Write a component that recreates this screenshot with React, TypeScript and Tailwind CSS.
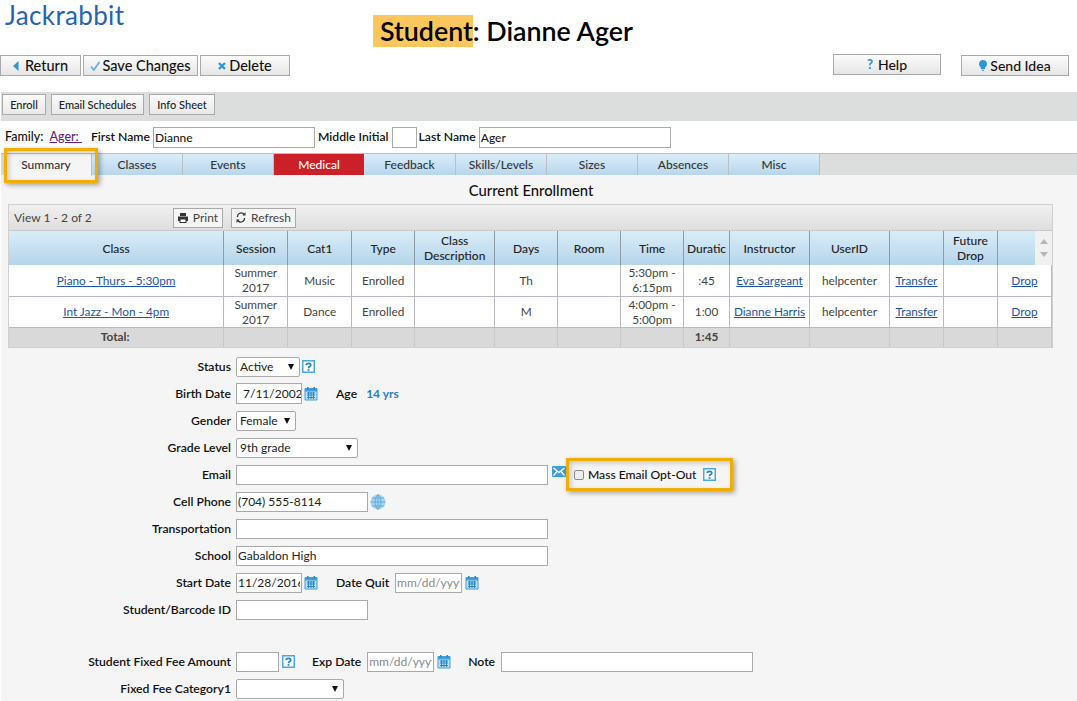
import React from 'react'

const HelpIcon = () => (
	<svg width="13" height="13" viewBox="0 0 13 13" className="shrink-0">
		<rect x="0.75" y="0.75" width="11.5" height="11.5" fill="#fff" stroke="#4aa8dc" strokeWidth="1.500" />
		<path d="M4.200 5C4.200 2.800 8.800 2.800 8.800 5C8.800 6.600 6.500 6.500 6.500 8.200" fill="none" stroke="#1f86c8" strokeWidth="1.700" />
		<rect x="5.600" y="9.100" width="1.800" height="1.700" fill="#1f86c8" />
	</svg>
)

const CalendarIcon = () => (
	<svg width="14" height="14" viewBox="0 0 14 14" className="shrink-0">
		<rect x="0.5" y="1" width="13" height="12.5" rx="1" fill="#3f9fdc" />
		<rect x="1.5" y="4.5" width="11" height="8" fill="#bfe0f4" />
		<path d="M3 6h8M3 8h8M3 10.500h8M4.500 5v7M7 5v7M9.500 5v7" stroke="#2d86c4" strokeWidth="1" />
		<rect x="3" y="0" width="1.500" height="2.500" fill="#2d86c4" />
		<rect x="9.500" y="0" width="1.500" height="2.500" fill="#2d86c4" />
	</svg>
)

const MailIcon = () => (
	<svg width="14" height="11" viewBox="0 0 14 11" className="shrink-0">
		<rect width="14" height="11" rx="1" fill="#3f9fdc" />
		<path d="M1.500 2 7 6.500 12.500 2M1.500 9.500 5 5.500M12.500 9.500 9 5.500" fill="none" stroke="#fff" strokeWidth="1.300" />
	</svg>
)

const GlobeIcon = () => (
	<svg width="16" height="16" viewBox="0 0 16 16" className="shrink-0">
		<circle cx="8" cy="8" r="7.500" fill="#a9d3ef" />
		<path d="M8 .5v15M.5 8h15M1.800 4h12.400M1.800 12h12.400M8 .5C4 4 4 12 8 15.500M8 .5c4 3.500 4 11.500 0 15" fill="none" stroke="#5aa9de" strokeWidth="0.900" />
	</svg>
)

const BackIcon = () => (
	<svg width="6" height="10" viewBox="0 0 6 10"><path d="M5.500 0v10L0 5z" fill="#2e96d8" /></svg>
)
const CheckIcon = () => (
	<svg width="10" height="10" viewBox="0 0 10 10"><path d="M1 5.500 3.800 9 9.500 1" fill="none" stroke="#62b0e4" strokeWidth="1.800" /></svg>
)
const CrossIcon = () => (
	<svg width="8" height="8" viewBox="0 0 8 8"><path d="M1 1l6 6M7 1 1 7" stroke="#2e96d8" strokeWidth="2.400" /></svg>
)
const BulbIcon = () => (
	<svg width="8" height="11" viewBox="0 0 8 11"><path d="M4 0a4 4 0 0 1 2.200 7.300V9H1.800V7.300A4 4 0 0 1 4 0zM2.500 9.700h3L4.500 11h-1z" fill="#2e96d8" /></svg>
)
const PrintIcon = () => (
	<svg width="10" height="10" viewBox="0 0 10 10"><path d="M2 0h6v3H2zM0 3.500h10V8H8.500v2h-7V8H0z" fill="#333" /><rect x="2.500" y="6.500" width="5" height="2.500" fill="#fff" /></svg>
)
const RefreshIcon = () => (
	<svg width="10" height="11" viewBox="0 0 10 11"><path d="M8 2.500A3.600 3.600 0 0 0 1.500 5M2 8.500A3.600 3.600 0 0 0 8.500 6" fill="none" stroke="#333" strokeWidth="1.300" /><path d="M6.500 3.500h3V0zM3.500 7.500h-3V11z" fill="#333" /></svg>
)

const topBtn = "flex h-[21px] items-center justify-center border border-[#a9a9a9] bg-gradient-to-b from-[#fbfbfb] to-[#e6e6e6] font-medium text-[#111]"
const subBtn = "flex h-[21px] items-center justify-center border border-[#a9a9a9] bg-gradient-to-b from-[#fbfbfb] to-[#e9e9e9] pt-px text-[11px] font-medium text-[#222]"

const tabs = [
	{ name: "Classes", w: "w-[91px]" },
	{ name: "Events", w: "w-[91px]" },
	{ name: "Medical", w: "w-[90px]", red: true },
	{ name: "Feedback", w: "w-[92px]" },
	{ name: "Skills/Levels", w: "w-[91px]" },
	{ name: "Sizes", w: "w-[91px]" },
	{ name: "Absences", w: "w-[91px]" },
	{ name: "Misc", w: "w-[91px]" },
]

const cols = [215, 64, 64, 63, 80, 63, 63, 63, 46, 80, 80, 54, 54, 54]
const heads = ["Class", "Session", "Cat1", "Type", "Class Description", "Days", "Room", "Time", "Duratic", "Instructor", "UserID", "", "Future Drop", ""]

const link = "text-[#1c55a5] underline"
const td = "border-r border-b border-[#bbb9c6] px-[1px] text-center align-middle"

const rows = [
	{ cls: "Piano - Thurs - 5:30pm", cat: "Music", days: "Th", time: "5:30pm - 6:15pm", dur: ":45", inst: "Eva Sargeant" },
	{ cls: "Int Jazz - Mon - 4pm", cat: "Dance", days: "M", time: "4:00pm - 5:00pm", dur: "1:00", inst: "Dianne Harris" },
]

const inputCls = "h-[20px] border border-[#a9a9a9] bg-white px-[1px] text-[12px] text-[#222] outline-none placeholder:text-[#8a8a8a]"
const labelCls = "pt-px text-[12.200px] font-semibold"

const Row = ({ label, children }: { label: string; children?: React.ReactNode }) => (
	<div className="flex h-[27px] items-center">
		<label className="w-[230px] shrink-0 pt-px text-right text-[12.200px] font-semibold text-[#111]">{label}</label>
		<div className="ml-[5px] flex items-center">{children}</div>
	</div>
)

const Select = ({ value, w }: { value: string; w: string }) => (
	<div className={`relative h-[20px] ${w}`}>
		<select defaultValue={value} className="block h-full w-full appearance-none rounded-[2px] border border-[#a9a9a9] bg-white pl-[3px] text-[12px] text-[#222] outline-none">
			<option>{value}</option>
		</select>
		<span className="absolute top-[7px] right-[6px] h-0 w-0 border-x-[3px] border-t-[6px] border-x-transparent border-t-[#111]" />
	</div>
)

export default function App() {
	return (
		<div className="relative h-[701px] w-[1077px] overflow-hidden bg-white font-[Lato,sans-serif] text-[#111]">
			<div className="flex h-[54px]">
				<div className="h-[32px] w-[373px] pl-[5px] text-[26px] leading-[31.500px] font-normal tracking-[0.35px] text-[#2465ab]">Jackrabbit</div>
				<h1 className="mt-[14px] h-[35px] text-[26.800px] leading-[35px] font-semibold text-black">
					<span className="bg-[#fbc75c] pl-[7px]">Student</span>: Dianne Ager
				</h1>
			</div>

			<div className="flex h-[38px] items-start">
				<div className="mt-px flex gap-[2px] text-[14.500px]">
					<button className={`${topBtn} w-[81px] gap-[6px]`}><BackIcon />Return</button>
					<button className={`${topBtn} w-[115px] gap-[2px]`}><CheckIcon />Save Changes</button>
					<button className={`${topBtn} w-[90px] gap-[3px]`}><CrossIcon />Delete</button>
				</div>
				<button className={`${topBtn} ml-[543px] w-[108px] gap-[5px] text-[14px]`}><span className="text-[13px] font-black text-[#2e96d8]">?</span>Help</button>
				<button className={`${topBtn} mt-px ml-[20px] w-[108px] gap-[3px] text-[14px]`}><BulbIcon />Send Idea</button>
			</div>

			<div className="ml-px flex h-[29px] items-start gap-[5px] bg-[#dcdddd] pt-[2px] pl-px">
				<button className={`${subBtn} w-[44px]`}>Enroll</button>
				<button className={`${subBtn} w-[93px]`}>Email Schedules</button>
				<button className={`${subBtn} w-[66px]`}>Info Sheet</button>
			</div>

			<div className="flex h-[32px] items-center pl-[5px] text-[12.500px] font-medium">
				<span>Family:</span>
				<a className="ml-[6px] text-[#6a1b7a] underline">Ager:&nbsp;</a>
				<span className={`ml-[9px] ${labelCls}`}>First Name</span>
				<input defaultValue="Dianne" className={`${inputCls} ml-[3px] h-[21px] w-[162px]`} />
				<span className={`ml-[3px] ${labelCls}`}>Middle Initial</span>
				<input className={`${inputCls} ml-[3px] h-[21px] w-[25px]`} />
				<span className={`ml-[2px] ${labelCls}`}>Last Name</span>
				<input defaultValue="Ager" className={`${inputCls} ml-[3px] h-[21px] w-[192px]`} />
			</div>

			<div className="ml-px flex h-[22px] border-t border-[#bdbdc5] bg-[#dcdddd]">
				<div className="ml-[6px] flex h-[22px] w-[85px] items-center justify-center border-r border-[#bdbdc5] bg-[#f5f5f5] pr-[6px] text-[12px] font-medium text-[#333]">Summary</div>
				{tabs.map((tab) => (
					<div
						key={tab.name}
						className={`flex h-[21px] ${tab.w} items-center justify-center border-r border-[#bdbdc5] text-[12px] font-medium ${tab.red ? "border-r-0 bg-[#cc2029] font-bold text-white" : "bg-gradient-to-b from-[#d9edf8] to-[#b7d6ec] text-[#333]"}`}
					>
						{tab.name}
					</div>
				))}
			</div>

			<div className="ml-px h-[526px] bg-[#f5f5f5]">
				<div className="h-[29px] pt-[7px] pr-[16px] text-center text-[14.800px] leading-[17px] font-medium text-[#111]">Current Enrollment</div>

				<div className="relative ml-[7px] w-[1045px] border border-[#cfcfcf]">
					<div className="flex h-[26px] items-center border-b border-[#c9c9c9] bg-gradient-to-b from-[#f0f0f0] to-[#dedede] pl-[5px] text-[12px] text-[#444]">
						<span className="w-[159px]">View 1 - 2 of 2</span>
						<button className="flex h-[20px] w-[50px] items-center justify-center gap-[5px] border border-[#a9a9a9] bg-[#f5f5f5]"><PrintIcon />Print</button>
						<button className="ml-[8px] flex h-[20px] w-[65px] items-center justify-center gap-[5px] border border-[#a9a9a9] bg-[#f5f5f5]"><RefreshIcon />Refresh</button>
					</div>
					<table className="table-fixed border-collapse text-[11.800px] leading-[15px] text-[#444]">
						<colgroup>
							{cols.map((w, i) => <col key={i} style={{ width: w }} />)}
						</colgroup>
						<thead>
							<tr className="h-[34px]">
								{heads.map((h, i) => (
									<th key={i} className="overflow-hidden border-r border-[#8f9ba6] bg-gradient-to-b from-[#d9edf8] to-[#b4d4ea] px-0 text-center text-[12px] font-medium whitespace-normal text-[#222]">
										{h === "Duratic" ? <span className="whitespace-nowrap">{h}</span> : h}
									</th>
								))}
							</tr>
						</thead>
						<tbody className="bg-white">
							{rows.map((r) => (
								<tr key={r.cls} className="h-[31px]">
									<td className={td}><a className={link}>{r.cls}</a></td>
									<td className={td}>Summer 2017</td>
									<td className={td}>{r.cat}</td>
									<td className={td}>Enrolled</td>
									<td className={td}></td>
									<td className={td}>{r.days}</td>
									<td className={td}></td>
									<td className={td}>{r.time}</td>
									<td className={td}>{r.dur}</td>
									<td className={td}><a className={link}>{r.inst}</a></td>
									<td className={td}>helpcenter</td>
									<td className={td}><a className={link}>Transfer</a></td>
									<td className={td}></td>
									<td className={td}><a className={link}>Drop</a></td>
								</tr>
							))}
							<tr className="h-[20px] bg-[#d9d9d9] font-bold text-[#444]">
								{cols.map((_, i) => (
									<td key={i} className="border-r border-[#c8c8c8] pb-[2px] text-center">
										{i === 0 ? <span className="pr-[2px]">Total:</span> : i === 8 ? "1:45" : ""}
									</td>
								))}
							</tr>
						</tbody>
					</table>
					{/* scroll arrows sitting over the end of the header */}
					<div className="absolute top-[26px] right-0 flex h-[34px] w-[17px] flex-col items-center justify-between bg-[#f1f1f1] py-[8px]">
						<span className="h-0 w-0 border-x-[4px] border-b-[5px] border-x-transparent border-b-[#b5b5b5]" />
						<span className="h-0 w-0 border-x-[4px] border-t-[5px] border-x-transparent border-t-[#b5b5b5]" />
					</div>
				</div>

				<div className="mt-[5px]">
					<Row label="Status">
						<Select value="Active" w="w-[64px]" />
						<span className="ml-[2px] flex"><HelpIcon /></span>
					</Row>
					<Row label="Birth Date">
						<input defaultValue="7/11/2002" className={`${inputCls} h-[21px] w-[66px] pr-0 pl-[6px]`} />
						<span className="ml-[2px]"><CalendarIcon /></span>
						<span className={`ml-[18px] ${labelCls}`}>Age</span>
						<span className="ml-[9px] text-[12px] font-bold text-[#2e7fbd]">14 yrs</span>
					</Row>
					<Row label="Gender"><Select value="Female" w="w-[60px]" /></Row>
					<Row label="Grade Level"><Select value="9th grade" w="w-[122px]" /></Row>
					<Row label="Email">
						<input className={`${inputCls} w-[312px]`} />
						<span className="mb-[6px] ml-[4px]"><MailIcon /></span>
						<div className="-my-[4px] flex h-[33px] w-[167px] items-center border-[3px] border-[#f2ae00] pl-[5px] shadow-[2px_2px_5px_rgba(0,0,0,0.35),inset_2px_2px_5px_rgba(0,0,0,0.2)]">
							<input type="checkbox" className="h-[10px] w-[10px] appearance-none rounded-[2px] border border-[#8a8a8a] bg-[#eee]" />
							<span className="ml-[4px] pt-px text-[12.100px] font-medium whitespace-nowrap">Mass Email Opt-Out</span>
							<span className="ml-[7px] flex"><HelpIcon /></span>
						</div>
					</Row>
					<Row label="Cell Phone">
						<input defaultValue="(704) 555-8114" className={`${inputCls} w-[132px]`} />
						<span className="ml-[2px]"><GlobeIcon /></span>
					</Row>
					<Row label="Transportation"><input className={`${inputCls} w-[312px]`} /></Row>
					<Row label="School"><input defaultValue="Gabaldon High" className={`${inputCls} w-[312px]`} /></Row>
					<Row label="Start Date">
						<input defaultValue="11/28/2016" className={`${inputCls} w-[66px]`} />
						<span className="ml-[2px]"><CalendarIcon /></span>
						<span className={`ml-[18px] ${labelCls}`}>Date Quit</span>
						<input placeholder="mm/dd/yyyy" className={`${inputCls} ml-[6px] w-[67px]`} />
						<span className="ml-[3px]"><CalendarIcon /></span>
					</Row>
					<Row label="Student/Barcode ID"><input className={`${inputCls} w-[132px]`} /></Row>
					<div className="h-[25px]" />
					<Row label="Student Fixed Fee Amount">
						<input className={`${inputCls} w-[43px]`} />
						<span className="ml-[3px] flex"><HelpIcon /></span>
						<span className={`ml-[17px] ${labelCls}`}>Exp Date</span>
						<input placeholder="mm/dd/yyyy" className={`${inputCls} ml-[6px] w-[67px]`} />
						<span className="ml-[3px]"><CalendarIcon /></span>
						<span className={`ml-[17px] ${labelCls}`}>Note</span>
						<input className={`${inputCls} ml-[6px] w-[252px]`} />
					</Row>
					<Row label="Fixed Fee Category1"><Select value="" w="w-[108px]" /></Row>
				</div>
			</div>

			{/* orange callout over the Summary tab */}
			<div className="absolute top-[148px] left-[4px] h-[35px] w-[94px] border-[3px] border-[#f2ae00] shadow-[2px_2px_5px_rgba(0,0,0,0.35),inset_2px_2px_5px_rgba(0,0,0,0.2)]" />
		</div>
	)
}
